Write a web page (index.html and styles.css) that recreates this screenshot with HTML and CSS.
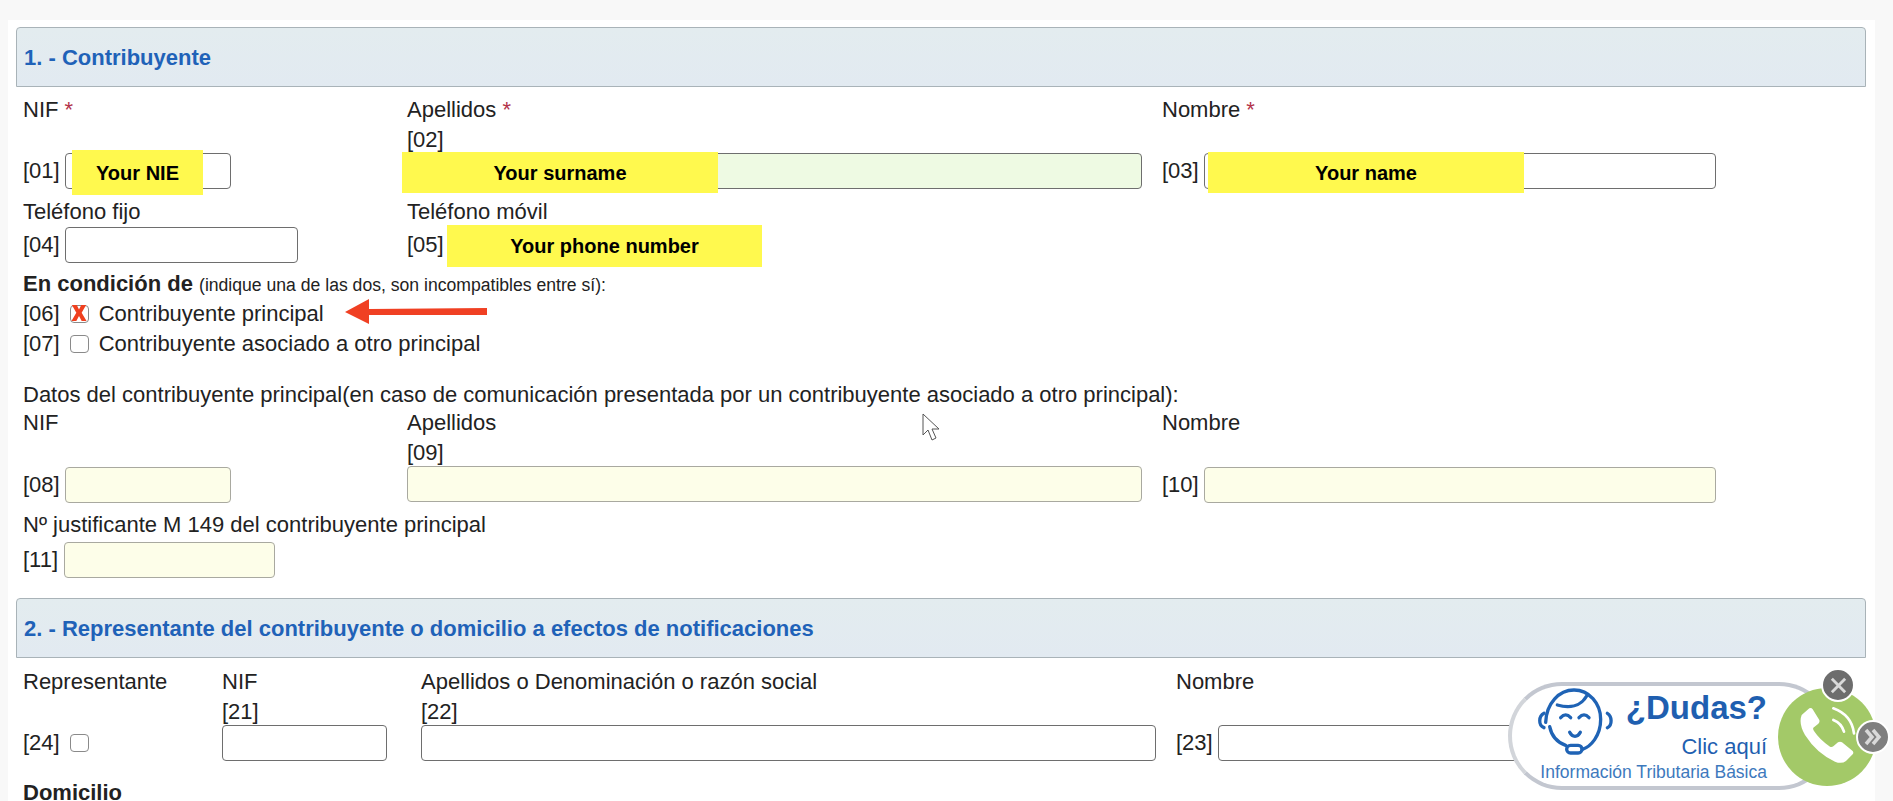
FILE: index.html
```html
<!DOCTYPE html>
<html lang="es">
<head>
<meta charset="utf-8">
<title>Modelo 149</title>
<link rel="stylesheet" href="styles.css">
</head>
<body>
<main class="sheet">
  <section class="block">
    <h2 class="head">1. - Contribuyente</h2>
    <div class="grid grid-a r1">
      <div class="field">
        <div class="lab">NIF <span class="req">*</span></div>
        <div class="line push">
          <span>[01]</span><input class="inp w-nif" type="text">
          <div class="mark m-nie">Your NIE</div>
        </div>
      </div>
      <div class="field">
        <div class="lab">Apellidos <span class="req">*</span></div>
        <div class="code">[02]</div>
        <input class="inp w-ape ok" type="text">
        <div class="mark m-sur">Your surname</div>
      </div>
      <div class="field">
        <div class="lab">Nombre <span class="req">*</span></div>
        <div class="line push">
          <span>[03]</span><input class="inp w-nom" type="text">
          <div class="mark m-nam">Your name</div>
        </div>
      </div>
    </div>
    <div class="grid grid-a r2">
      <div class="field">
        <div class="lab">Teléfono fijo</div>
        <div class="line"><span>[04]</span><input class="inp w-tel" type="text"></div>
      </div>
      <div class="field">
        <div class="lab">Teléfono móvil</div>
        <div class="line fix">
          <span>[05]</span>
          <div class="mark m-pho">Your phone number</div>
        </div>
      </div>
    </div>
    <div class="text cond"><b>En condición de</b> <small>(indique una de las dos, son incompatibles entre sí):</small></div>
    <div class="check-row first">
      <span>[06]</span><span class="box"><svg class="x" viewBox="0 0 18 18"><path d="M1 0h5.500l2.500 5 2.500-5H17l-5 8.800L17.500 18H12l-3-5.500L6 18H.5L6 8.800z"/></svg></span><span class="chk-t">Contribuyente principal</span>
      <svg class="arrow" viewBox="0 0 142 25"><path d="M0 13 24 0v10l118-1v7L24 16v9z"/></svg>
    </div>
    <div class="check-row">
      <span>[07]</span><span class="box"></span><span class="chk-t">Contribuyente asociado a otro principal</span>
    </div>
    <div class="text datos">Datos del contribuyente principal(en caso de comunicación presentada por un contribuyente asociado a otro principal):</div>
    <div class="grid grid-a r3">
      <div class="field">
        <div class="lab">NIF</div>
        <div class="line push"><span>[08]</span><input class="inp w-nif pale" type="text"></div>
      </div>
      <div class="field">
        <div class="lab">Apellidos</div>
        <div class="code">[09]</div>
        <input class="inp w-ape pale" type="text">
        <svg class="cursor" viewBox="0 0 20 28"><path d="M1 1v21l5-5 4 10 4-2-4-9h7z"/></svg>
      </div>
      <div class="field">
        <div class="lab">Nombre</div>
        <div class="line push"><span>[10]</span><input class="inp w-nom pale" type="text"></div>
      </div>
    </div>
    <div class="just">
      <div class="lab">Nº justificante M 149 del contribuyente principal</div>
      <div class="line tight"><span>[11]</span><input class="inp w-jus pale" type="text"></div>
    </div>
  </section>
  <section class="block second">
    <h2 class="head">2. - Representante del contribuyente o domicilio a efectos de notificaciones</h2>
    <div class="grid grid-b r4">
      <div class="field">
        <div class="lab">Representante</div>
        <div class="line push rep"><span>[24]</span><span class="box"></span></div>
      </div>
      <div class="field">
        <div class="lab">NIF</div>
        <div class="code">[21]</div>
        <input class="inp w-nifb" type="text">
      </div>
      <div class="field">
        <div class="lab">Apellidos o Denominación o razón social</div>
        <div class="code">[22]</div>
        <input class="inp w-ape" type="text">
      </div>
      <div class="field">
        <div class="lab">Nombre</div>
        <div class="line push"><span>[23]</span><input class="inp w-nom" type="text"></div>
      </div>
    </div>
    <div class="text domi"><b>Domicilio</b></div>
  </section>
</main>
<aside class="help">
  <div class="pill">
    <svg class="agent" viewBox="0 0 270 225" fill="none">
      <path d="M50 112C52 55 90 15 135 15c45 0 80 40 80 88 0 50-30 82-55 90"/>
      <path d="M62 125c6 30 25 48 48 56"/>
      <path d="M85 60c35 10 70 5 88-27"/>
      <path d="M45 85c-16 8-18 36 0 43M235 85c14 8 16 36 0 43"/>
      <path d="M95 98c10-11 20-11 30 0M150 98c10-11 20-11 30 0M122 142c8 16 24 16 32 0"/>
      <rect x="113" y="181" width="46" height="23" rx="11.500"/>
    </svg>
    <div class="help-t">
      <div class="dudas">¿Dudas?</div>
      <div class="clic">Clic aquí</div>
      <div class="info">Información Tributaria Básica</div>
    </div>
  </div>
  <svg class="phone" viewBox="0 0 294 294">
    <circle cx="147" cy="147" r="147"/>
    <path class="hs" d="M71 81 94 61Q100 58 104 64L124 96Q126 103 121 107L106 119Q104 123 108 129Q126 156 156 176Q161 179 166 175L180 163Q186 159 192 163L224 189Q228 195 224 199L204 219Q191 229 171 221Q116 196 81 141Q61 106 71 81Z"/>
    <path class="wv" d="M166 96Q191 106 198 131M166 61Q221 81 228 136"/>
  </svg>
  <div class="dot close"><svg viewBox="0 0 20 20"><path d="M3 3l14 14M17 3 3 17"/></svg></div>
  <div class="dot next"><svg viewBox="0 0 20 20"><path d="M3 3l6 7-6 7M10 3l6 7-6 7"/></svg></div>
</aside>
</body>
</html>
```
FILE: styles.css
```css
* { box-sizing: border-box; }
html, body { margin: 0; height: 801px; overflow: hidden; }
body {
  position: relative;
  background: #f8f8f8;
  font-family: "Liberation Sans", Arial, sans-serif;
  font-size: 22px;
  line-height: 30px;
  color: #222;
}
.sheet {
  margin: 20px 18px 0 8px;
  padding: 7px 9px 0 8px;
  background: #fff;
  height: 781px;
}
.head {
  margin: 0;
  height: 60px;
  padding: 2px 7px 0 7px;
  display: flex;
  align-items: center;
  font-size: 22px;
  font-weight: 700;
  color: #1f62b8;
  background: linear-gradient(#e3ecef, #e2eaf1);
  border: 1px solid #a9b3b8;
  border-radius: 4px 4px 0 0;
}
.grid { display: grid; padding-left: 7px; }
.grid-a { grid-template-columns: 384px 755px 1fr; }
.grid-b { grid-template-columns: 199px 199px 755px 1fr; }
.r1 { margin-top: 8px; height: 94px; }
.r2 { margin-top: 8px; height: 66px; }
.r3 { margin-top: -2px; height: 95px; }
.r4 { margin-top: 9px; height: 93px; }
.field { position: relative; display: flex; flex-direction: column; }
.lab { height: 30px; }
.code { height: 28px; }
.line { position: relative; display: flex; align-items: center; gap: 5px; }
.fix { height: 36px; }
.push { margin-top: auto; }
.tight { gap: 6px; margin-top: 2px; }
.rep { gap: 0; height: 36px; }
.req { color: #b3344a; }
.inp {
  height: 36px;
  padding: 0 6px;
  background: #fff;
  border: 1px solid #6e6e6e;
  border-radius: 4px;
  font: inherit;
}
.ok { background: #eefae3; }
.pale { background: #fdfee9; border-color: #a9a9a0; }
.w-nif { width: 166px; }
.w-ape { width: 735px; }
.w-nom { width: 512px; }
.w-tel { width: 233px; }
.w-jus { width: 211px; }
.w-nifb { width: 165px; }
.mark {
  position: absolute;
  display: flex;
  align-items: center;
  justify-content: center;
  background: #fff94e;
  color: #000;
  font-size: 20px;
  font-weight: 700;
}
.m-nie { left: 49px; top: -3px; width: 131px; height: 45px; }
.m-sur { left: -5px; top: 57px; width: 316px; height: 41px; }
.m-nam { left: 46px; top: -1px; width: 316px; height: 41px; }
.m-pho { left: 40px; top: -2px; width: 315px; height: 42px; }
.text { padding-left: 7px; }
.cond { margin-top: 6px; }
.cond small { font-size: 17.600px; }
.check-row { position: relative; display: flex; align-items: center; height: 30px; padding-left: 7px; }
.first { margin-top: -1px; }
.chk-t { margin-left: 10px; }
.box {
  position: relative;
  width: 19px;
  height: 18px;
  margin-left: 10px;
  background: #fff;
  border: 1.500px solid #8a8a8a;
  border-radius: 4px;
}
.x { position: absolute; left: 0; top: -2px; width: 16px; height: 18px; fill: #f0401f; }
.arrow { position: absolute; left: 329px; top: 0; width: 142px; height: 25px; fill: #f04023; }
.datos { margin-top: 21px; }
.cursor { position: absolute; left: 515px; top: 5px; width: 20px; height: 28px; fill: #fff; stroke: #555; stroke-width: 1; }
.just { padding-left: 7px; margin-top: 7px; }
.second { margin-top: 20px; }
.domi { margin-top: 18px; }
.help { position: absolute; left: 1508px; top: 665px; width: 385px; height: 136px; }
.pill {
  position: absolute;
  left: 0;
  top: 17px;
  width: 325px;
  height: 108px;
  display: flex;
  padding: 5px 62px 0 27px;
  background: #fff;
  border: 4px solid #c3c7d0;
  border-left-color: #d2d5da;
  border-radius: 54px;
  color: #1f5fb0;
}
.agent { position: absolute; left: 17px; top: -1px; width: 90px; height: 75px; stroke: #1f63b5; stroke-width: 10; stroke-linecap: round; }
.help-t { margin-left: auto; display: flex; flex-direction: column; align-items: flex-end; line-height: 1; }
.dudas { font-size: 33px; font-weight: 700; }
.clic { font-size: 22px; margin-top: 12px; }
.info { font-size: 17.500px; margin-top: 6px; color: #3d79bd; }
.phone { position: absolute; left: 270px; top: 23px; width: 98px; height: 98px; fill: #a3c968; }
.phone .hs { fill: #fff; }
.phone .wv { fill: none; stroke: #fff; stroke-width: 8; stroke-linecap: round; }
.dot {
  position: absolute;
  width: 34px;
  height: 34px;
  display: flex;
  align-items: center;
  justify-content: center;
  border: 2px solid #fff;
  border-radius: 50%;
}
.dot svg { fill: none; stroke: #d9d9d9; stroke-width: 3; }
.close { left: 313px; top: 3px; background: #6d6d6d; }
.close svg { width: 19px; height: 19px; }
.next { left: 348px; top: 55px; background: #7f7f7f; }
.next svg { width: 20px; height: 20px; stroke-width: 3.500; }
```
